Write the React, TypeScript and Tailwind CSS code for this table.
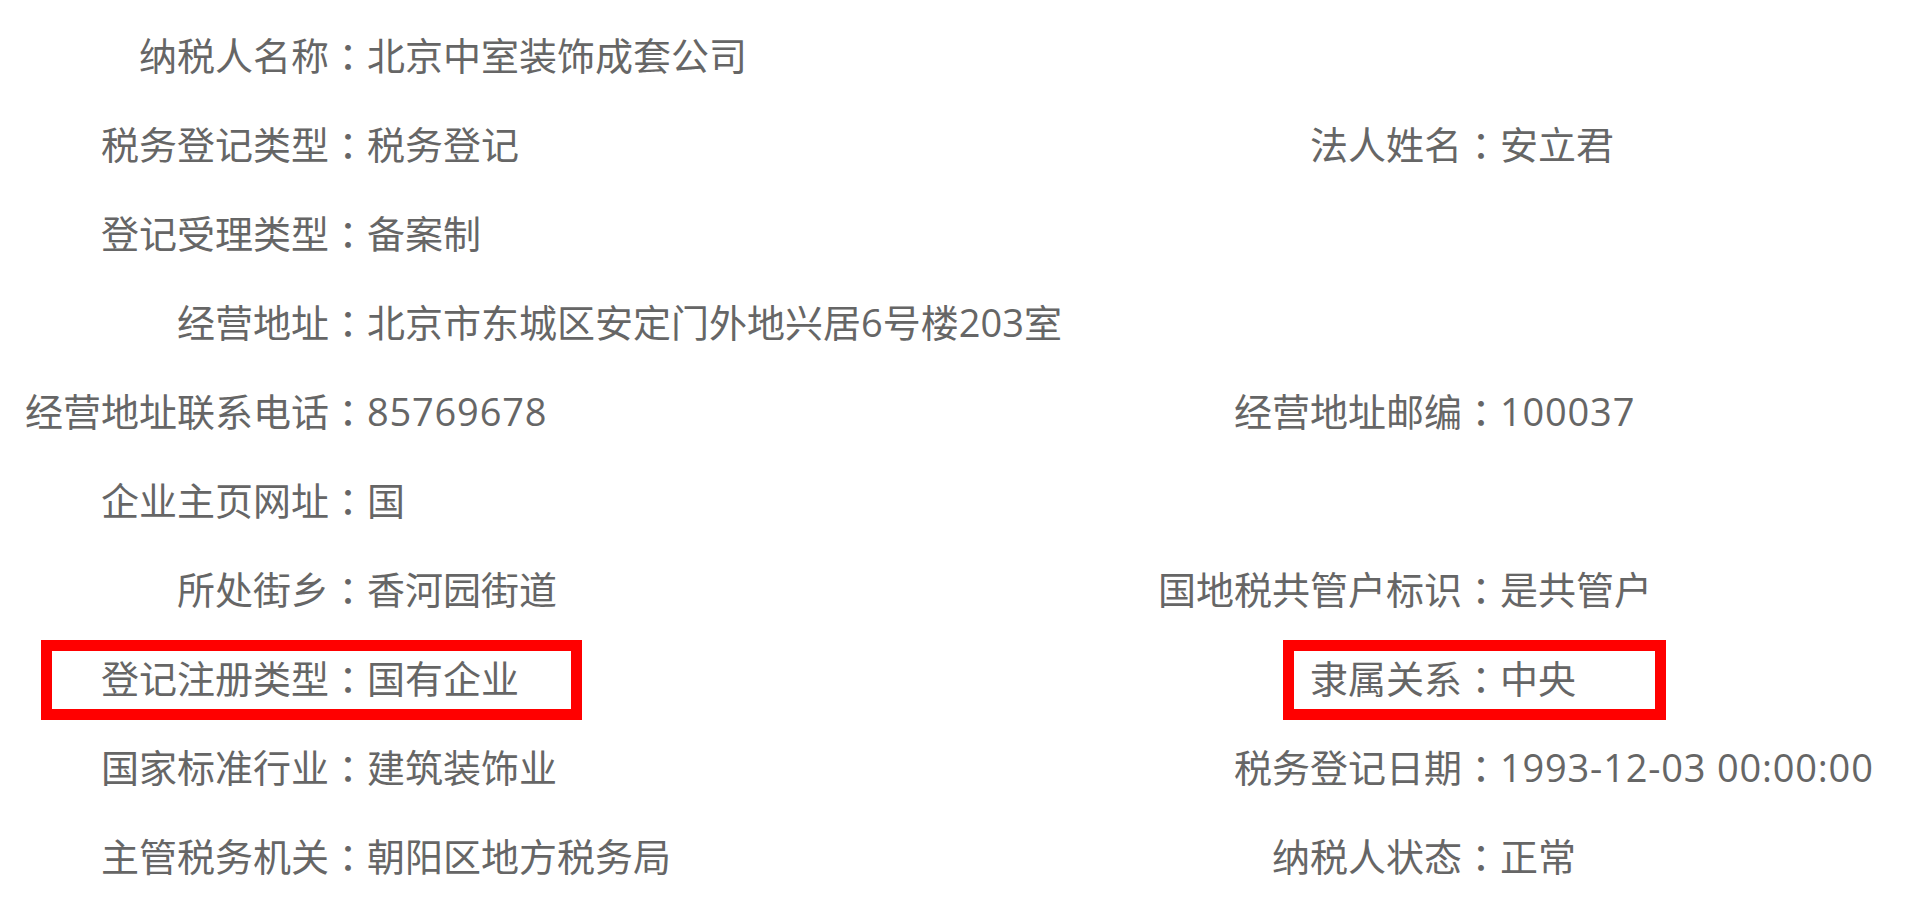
import React from "react";

type Cell = { label: string; value: string; num?: boolean } | null;
type Row = { left: Cell; right: Cell; boxed?: boolean };

const rows: Row[] = [
  { left: { label: "纳税人名称", value: "北京中室装饰成套公司" }, right: null },
  { left: { label: "税务登记类型", value: "税务登记" }, right: { label: "法人姓名", value: "安立君" } },
  { left: { label: "登记受理类型", value: "备案制" }, right: null },
  { left: { label: "经营地址", value: "北京市东城区安定门外地兴居6号楼203室" }, right: null },
  { left: { label: "经营地址联系电话", value: "85769678", num: true }, right: { label: "经营地址邮编", value: "100037", num: true } },
  { left: { label: "企业主页网址", value: "国" }, right: null },
  { left: { label: "所处街乡", value: "香河园街道" }, right: { label: "国地税共管户标识", value: "是共管户" } },
  { left: { label: "登记注册类型", value: "国有企业" }, right: { label: "隶属关系", value: "中央" }, boxed: true },
  { left: { label: "国家标准行业", value: "建筑装饰业" }, right: { label: "税务登记日期", value: "1993-12-03 00:00:00", num: true } },
  { left: { label: "主管税务机关", value: "朝阳区地方税务局" }, right: { label: "纳税人状态", value: "正常" } },
];

function Pair({ cell }: { cell: Cell }) {
  if (!cell) {
    return (
      <>
        <span />
        <span />
        <span />
      </>
    );
  }
  return (
    <>
      <span className="text-right whitespace-nowrap">{cell.label}</span>
      <span className="text-center font-['Noto_Sans_CJK_TC',sans-serif]">：</span>
      <span className={cell.num ? "whitespace-nowrap tracking-[0.8px]" : "whitespace-nowrap"}>{cell.value}</span>
    </>
  );
}

export default function App() {
  return (
    <div className="w-[1920px] h-[920px] bg-white overflow-hidden pt-[10px] text-[38px] leading-none text-[#666666] font-['Open_Sans','Noto_Sans_CJK_SC',sans-serif]">
      {rows.map((r, i) => (
        <div
          key={i}
          className="relative grid grid-cols-[329px_38px_766px_329px_38px_1fr] items-center h-[89px]"
        >
          <Pair cell={r.left} />
          <Pair cell={r.right} />
          {r.boxed && (
            <>
              <div className="absolute left-[41px] top-[7px] w-[541px] h-[80px] border-[11px] border-[#ff0000] pointer-events-none" />
              <div className="absolute left-[1283px] top-[7px] w-[383px] h-[80px] border-[11px] border-[#ff0000] pointer-events-none" />
            </>
          )}
        </div>
      ))}
    </div>
  );
}
